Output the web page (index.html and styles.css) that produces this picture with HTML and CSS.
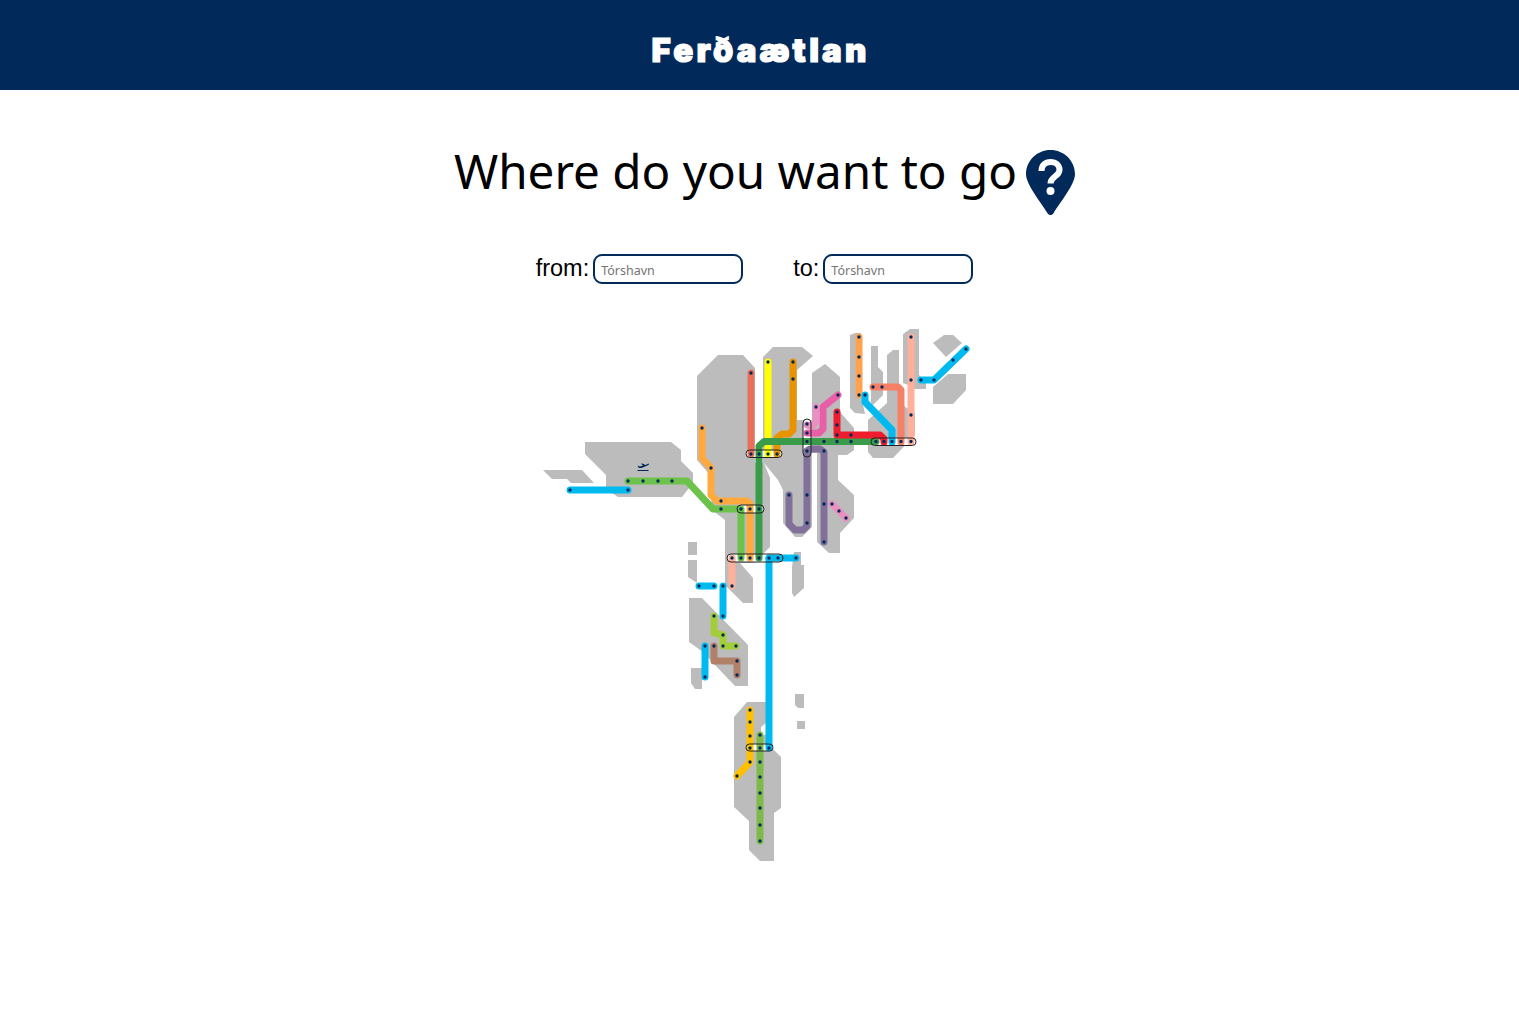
FILE: index.html
```html
<!DOCTYPE html>
<html lang="en">
<head>
<meta charset="utf-8">
<title>Ferðaætlan</title>
<link rel="stylesheet" href="styles.css">
</head>
<body>
<header class="topbar"><div class="logo">Ferðaætlan</div></header>
<main class="content">
  <div class="title-row">
    <h1 class="title">Where do you want to go</h1>
    <svg class="pin" viewBox="0 0 49 65" aria-hidden="true">
      <path class="pin-body" d="M24.5 0C11 0 0 10.8 0 24.2C0 34.5 15.500 53 21.500 63.200C23 65.600 26 65.600 27.500 63.200C33.500 53 49 34.500 49 24.200C49 10.800 38 0 24.500 0Z"/>
      <path class="pin-q" d="M15.500 21C15.500 15 19.500 12 24.500 12C30 12 33.500 15.500 33.500 20C33.500 26.500 24.500 26.500 24.500 33.500"/>
      <circle class="pin-dot" cx="24.500" cy="41" r="4"/>
    </svg>
  </div>
  <form class="route-form">
    <label class="field"><span class="field-label">from:</span><input class="field-input" type="text" placeholder="Tórshavn"></label>
    <label class="field"><span class="field-label">to:</span><input class="field-input" type="text" placeholder="Tórshavn"></label>
  </form>
  <svg class="map" viewBox="530 320 460 550" role="img" aria-label="Route map of the Faroe Islands">
    <g class="land">
      <polygon points="585,442 671,442 681,450 681,461 693,473 693,483 682,497 618,497 606,489 606,475 585,454"/>
      <polygon points="543,470 582,470 594,483 571,483 567,479 552,479"/>
      <polygon points="697,376 718,355 743,355 755,368 755,463 764,463 770,478 770,547 754,563 740,563 753,578 753,603 743,603 725,585 725,520 712,510 710,475 697,460"/>
      <polygon points="763,357 773,347 802,347 813,356 797,370 797,420 812,420 812,373 825,364 840,377 840,412 854,428 854,450 847,455 838,455 838,480 854,495 854,518 840,533 840,553 829,553 817,542 817,453 812,453 812,527 802,537 795,537 783,523 783,490 778,480 764,463 763,463"/>
      <polygon points="850,335 855,333 861,333 861,395 865,414 855,413 850,408"/>
      <polygon points="871,346 878,346 878,367 883,372 883,395 873,405 871,403"/>
      <polygon points="887,355 893,350 899,350 899,403 887,403"/>
      <polygon points="868,420 887,403 899,403 915,413 915,435 893,458 873,458 868,452"/>
      <polygon points="903,334 910,329 919,329 919,375 926,382 926,389 915,389 908,385 903,383"/>
      <polygon points="933,343 944,335 953,335 962,343 946,357"/>
      <polygon points="933,387 948,374 966,374 966,390 953,404 933,404"/>
      <polygon points="794,552 801,552 801,565 804,565 804,588 794,597 792,593 792,567"/>
      <polygon points="688,542 697,542 697,555 688,555"/>
      <polygon points="688,560 697,560 697,583 688,577"/>
      <polygon points="689,598 702,598 748,645 748,686 735,686 715,665 703,652 689,642"/>
      <polygon points="691,668 702,668 702,689 695,689 691,683"/>
      <polygon points="734,717 747,702 766,702 766,723 761,727 761,735 769,735 772,748 781,757 781,808 774,813 774,861 760,861 749,850 749,821 734,807"/>
      <polygon points="795,694 804,694 804,708 798,708 795,705"/>
      <polygon points="797,721 805,721 805,729 797,729"/>
    </g>
    <g class="pill-fill">
      <rect x="727" y="554" width="56" height="8" rx="4"/>
      <rect x="746" y="450" width="36" height="7.500" rx="3.700"/>
      <rect x="737" y="505" width="27" height="8" rx="4"/>
      <rect x="803" y="419" width="8" height="38" rx="4"/>
      <rect x="871" y="438" width="45" height="7.500" rx="3.700"/>
      <rect x="746" y="744" width="27" height="7" rx="3.500"/>
    </g>
    <g class="routes">
      <polyline class="c-blue" points="570,490 628,490"/>
      <polyline class="c-lime" points="628,481 687,481 713,509 741,509 741,558"/>
      <polyline class="c-orange" points="702,428 702,458 711,468 711,495 717,501 747,501 750,504 750,558"/>
      <polyline class="c-salmon" points="751,373 751,454"/>
      <polyline class="c-yellow" points="768,362 768,454"/>
      <polyline class="c-amber" points="793,362 793,430 789,434 782,434 777,438 777,454"/>
      <polyline class="c-green" points="876,441.500 764,441.500 759,446 759,558"/>
      <polyline class="c-red" points="837,412 837,435 880,435 884,439 884,442"/>
      <polyline class="c-magenta" points="838,395 823,407 823,429 819,433 807,433"/>
      <polyline class="c-pink" points="816,407 816,422 812,426 807,425"/>
      <polyline class="c-purple" points="807,451 807,526 803,530 795,530 789,524 789,495"/>
      <polyline class="c-purple" points="807,451 810,449 820,449 824,452 824,542"/>
      <polyline class="c-pink" points="832,504 846,518"/>
      <polyline class="c-orange2" points="859,337 859,395"/>
      <polyline class="c-blue" points="865,395 865,402 892,430 892,442"/>
      <polyline class="c-coral" points="873,387 898,387 901,390 901,442"/>
      <polyline class="c-peach" points="911,337 911,442"/>
      <polyline class="c-blue" points="921,380 934,380 966,349"/>
      <polyline class="c-blue" points="769,558 769,748"/>
      <polyline class="c-blue" points="769,558 796,558"/>
      <polyline class="c-peach" points="732,558 732,586"/>
      <polyline class="c-blue" points="699,586 714,586"/>
      <polyline class="c-blue" points="723,586 723,616"/>
      <polyline class="c-leaf" points="714,616 714,633 723,635 723,646 736,646"/>
      <polyline class="c-blue" points="705,646 705,677"/>
      <polyline class="c-brown" points="714,646 714,661 737,661 737,675"/>
      <polyline class="c-gold" points="750,710 750,762 737,776"/>
      <polyline class="c-moss" points="760,735 760,841"/>
    </g>
    <g class="pill-line">
      <rect x="727" y="554" width="56" height="8" rx="4"/>
      <rect x="746" y="450" width="36" height="7.500" rx="3.700"/>
      <rect x="737" y="505" width="27" height="8" rx="4"/>
      <rect x="803" y="419" width="8" height="38" rx="4"/>
      <rect x="871" y="438" width="45" height="7.500" rx="3.700"/>
      <rect x="746" y="744" width="27" height="7" rx="3.500"/>
    </g>
    <path class="stops" d="M570 490h0M628 490h0M628 481h0M643 481h0M658 481h0M672 481h0M721 509h0M741 509h0M750 509h0M759 509h0M702 428h0M711 468h0M721 501h0M732 558h0M741 558h0M750 558h0M759 558h0M769 558h0M778 558h0M796 558h0M751 373h0M751 454h0M759 454h0M768 454h0M777 454h0M768 362h0M793 362h0M793 379h0M838 395h0M816 407h0M807 424h0M807 433h0M807 441.500h0M807 451h0M824 441.500h0M837 441.500h0M851 441.500h0M837 412h0M837 425h0M837 435h0M851 435h0M876 441.500h0M884 441.500h0M892 441.500h0M901 441.500h0M911 441.500h0M859 337h0M859 357h0M859 376h0M859 395h0M865 395h0M873 387h0M882 387h0M911 337h0M911 380h0M911 415h0M921 380h0M934 380h0M953 360h0M966 349h0M807 495h0M807 523h0M789 495h0M824 451h0M824 504h0M824 542h0M832 504h0M839 511h0M846 518h0M732 586h0M699 586h0M714 586h0M723 586h0M723 616h0M714 616h0M723 635h0M723 646h0M736 646h0M705 646h0M705 677h0M714 646h0M737 661h0M737 675h0M750 710h0M750 722h0M750 736h0M750 748h0M750 762h0M737 776h0M760 735h0M760 748h0M760 762h0M760 777h0M760 793h0M760 808h0M760 825h0M760 841h0M769 748h0"/>
    <g class="plane">
      <path d="M637.500 465.500L640 466.500L643 465.500L641 463.800L642.500 463.600L645.500 465L648.500 463.500C649.500 463.500 649 464.800 648 465.300L641.500 468L638.800 468Z"/>
      <rect x="637.500" y="470" width="11" height="1"/>
    </g>
  </svg>
</main>
</body>
</html>
```
FILE: styles.css
```css
html, body { margin: 0; padding: 0; background: #fff; }
body { font-family: "Liberation Sans", Arial, sans-serif; color: #000; }
.topbar { height: 90px; background: #012a5b; display: flex; align-items: center; justify-content: center; }
.logo { font-family: "Inter", sans-serif; font-weight: 900; font-size: 33px; line-height: 1; color: #fff; letter-spacing: 3.200px; -webkit-text-stroke: 1.200px #fff; padding-top: 10px; margin-left: 2px; }
.content { display: flex; flex-direction: column; align-items: center; }
.title-row { display: flex; align-items: flex-start; gap: 9px; margin-top: 60px; height: 65px; margin-left: 10px; }
.title { margin: 0; font-family: "Noto Sans", sans-serif; font-weight: 400; font-size: 47.600px; line-height: 42px; }
.pin { width: 49px; height: 65px; display: block; }
.pin-body { fill: #012a5b; }
.pin-q { fill: none; stroke: #fff; stroke-width: 6; }
.pin-dot { fill: #fff; }
.route-form { display: flex; gap: 50px; margin-top: 39px; margin-right: 10px; }
.field { display: flex; align-items: center; gap: 4px; }
.field-label { font-size: 23.500px; line-height: 28px; position: relative; top: -1px; }
.field-input { box-sizing: border-box; width: 150px; height: 30px; border: 2px solid #012a5b; border-radius: 9px; padding: 3px 6px 0; font-family: "Noto Sans", sans-serif; font-size: 12.500px; background: #fff; outline: none; }
.field-input::placeholder { color: #757575; opacity: 1; }
.map { display: block; width: 460px; height: 550px; margin-top: 36px; }
.land polygon { fill: #bcbcbc; }
.pill-fill rect { fill: #fff; }
.pill-line rect { fill: none; stroke: #222; stroke-width: 1; }
.routes polyline { fill: none; stroke-width: 7; stroke-linecap: round; stroke-linejoin: round; }
.stops { fill: none; stroke: #012a5b; stroke-width: 3.400; stroke-linecap: round; }
.plane { fill: #012a5b; }
.c-blue { stroke: #00b9ee; }
.c-lime { stroke: #6cc24a; }
.c-orange { stroke: #ffa93e; }
.c-orange2 { stroke: #ffa24f; }
.c-salmon { stroke: #e8705a; }
.c-yellow { stroke: #ffff00; }
.c-amber { stroke: #e89400; }
.c-green { stroke: #3a9b4a; }
.c-red { stroke: #ee1c2e; }
.c-magenta { stroke: #e85fa8; }
.c-pink { stroke: #ea90c0; }
.c-purple { stroke: #80709a; }
.c-coral { stroke: #f58066; }
.c-peach { stroke: #ffb09a; }
.c-leaf { stroke: #a4ce39; }
.c-brown { stroke: #b08068; }
.c-gold { stroke: #ffc000; }
.c-moss { stroke: #7dba4a; }
```
